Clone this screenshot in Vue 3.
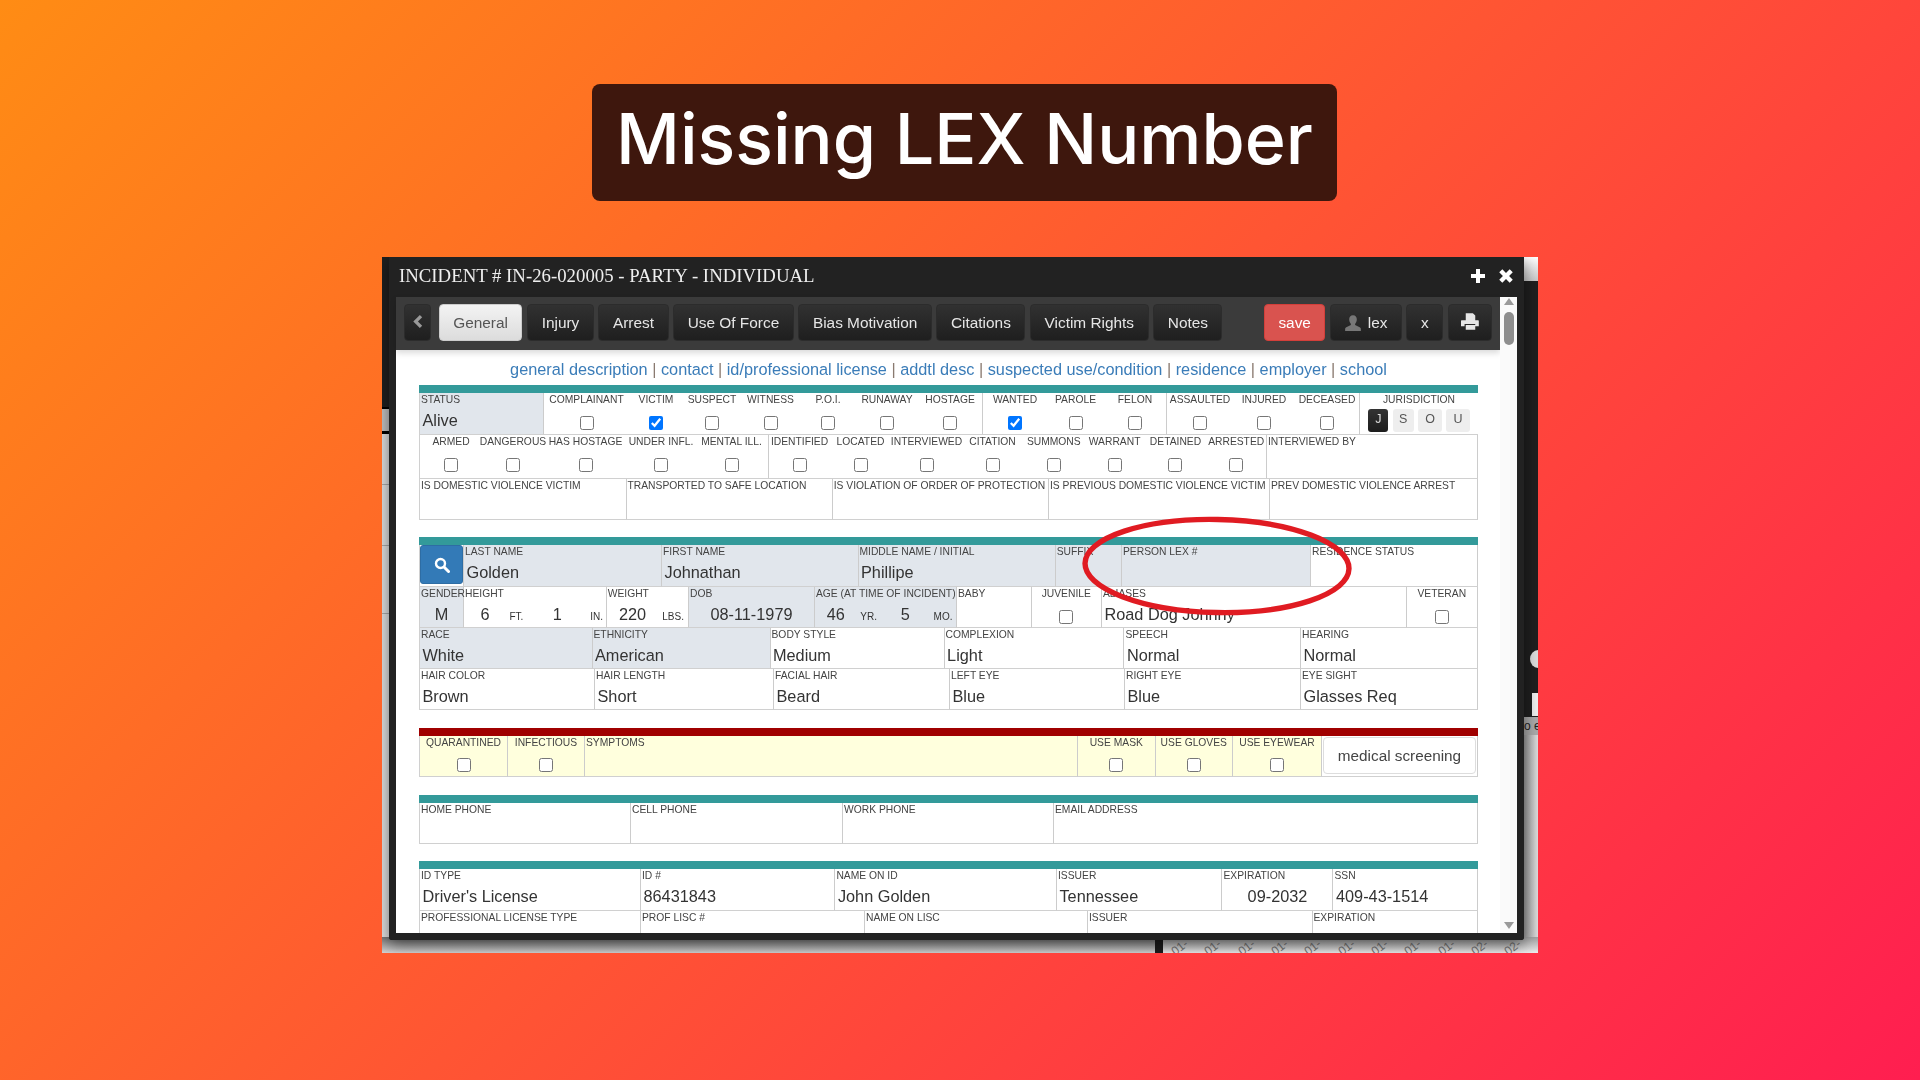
<script setup>
const tabs = ["Injury", "Arrest", "Use Of Force", "Bias Motivation", "Citations", "Victim Rights", "Notes"];
const links = ["general description", "contact", "id/professional license", "addtl desc", "suspected use/condition", "residence", "employer", "school"];
const dates = ["01-", "01-", "01-", "01-", "01-", "01-", "01-", "01-", "01-", "02-", "02-"];

// t = text cell, c = checkbox cell
const t = (w, label, value = "", fill = false, extra = {}) => ({ w, label, value, fill, line: true, ...extra });
const c = (w, label, checked = false, line = false) => ({ w, label, check: true, checked, line });

const sections = [
  {
    color: "#339a9a",
    mb: 17,
    rows: [
      {
        h: 42,
        cols: [
          t(125, "Status", "Alive", true),
          c(85, "Complainant"), c(54, "Victim", true), c(58, "Suspect"), c(59, "Witness"),
          c(56, "P.O.I."), c(62, "Runaway"), c(65, "Hostage", false, true),
          c(64, "Wanted", true), c(57, "Parole"), c(63, "Felon", false, true),
          c(66, "Assaulted"), c(62, "Injured"), c(65, "Deceased", false, true),
          { label: "Jurisdiction", juris: true },
        ],
      },
      {
        h: 44,
        cols: [
          c(63, "Armed"), c(62, "Dangerous"), c(83, "Has Hostage"), c(68, "Under Infl."),
          c(74, "Mental Ill.", false, true),
          c(61, "Identified"), c(61, "Located"), c(71, "Interviewed"), c(61, "Citation"),
          c(61.6, "Summons"), c(60, "Warrant"), c(61.8, "Detained"),
          c(60.6, "Arrested", false, true),
          t(0, "Interviewed By"),
        ],
      },
      {
        h: 41,
        cols: [
          t(207.5, "Is Domestic Violence Victim"), t(206.2, "Transported To Safe Location"),
          t(216.3, "Is Violation Of Order Of Protection"), t(221, "Is Previous Domestic Violence Victim"),
          t(0, "Prev Domestic Violence Arrest"),
        ],
      },
    ],
  },
  {
    color: "#339a9a",
    mb: 18,
    rows: [
      {
        h: 42,
        cols: [
          { w: 45, search: true, line: true },
          t(198, "Last Name", "Golden", true), t(196.5, "First Name", "Johnathan", true),
          t(197.2, "Middle Name / Initial", "Phillipe", true), t(66.3, "Suffix", "", true),
          t(189, "Person Lex #", "", true), t(0, "Residence Status"),
        ],
      },
      {
        h: 41,
        cols: [
          t(45, "Gender", "M", true, { center: true }),
          { w: 142.7, label: "Height", line: true, parts: [{ w: 42, v: "6" }, { w: 21, u: "FT." }, { w: 61, v: "1" }, { w: 18, u: "IN." }] },
          { w: 82.3, label: "Weight", line: true, parts: [{ w: 52, v: "220" }, { w: 30, u: "LBS." }] },
          t(126, "DOB", "08-11-1979", true, { center: true }),
          { w: 142, label: "Age (At Time Of Incident)", fill: true, line: true, parts: [{ w: 42, v: "46" }, { w: 24, u: "YR." }, { w: 50, v: "5" }, { w: 26, u: "MO." }] },
          t(74.6, "Baby"), c(70.4, "Juvenile", false, true), t(304.6, "Aliases", "Road Dog Johnny"), c(0, "Veteran", false, true),
        ],
      },
      {
        h: 41,
        cols: [
          t(173.5, "Race", "White", true), t(178, "Ethnicity", "American", true), t(174.1, "Body Style", "Medium"),
          t(179.9, "Complexion", "Light"), t(176.5, "Speech", "Normal"), t(0, "Hearing", "Normal"),
        ],
      },
      {
        h: 41,
        cols: [
          t(176, "Hair Color", "Brown"), t(179, "Hair Length", "Short"), t(176, "Facial Hair", "Beard"),
          t(175, "Left Eye", "Blue"), t(176, "Right Eye", "Blue"), t(0, "Eye Sight", "Glasses Req"),
        ],
      },
    ],
  },
  {
    color: "#a00000",
    yellow: true,
    mb: 18,
    rows: [
      {
        h: 41,
        cols: [
          c(89, "Quarantined", false, true), c(77, "Infectious", false, true), t(493, "Symptoms"),
          c(77.6, "Use Mask", false, true), c(77.4, "Use Gloves", false, true), c(89, "Use Eyewear", false, true),
          { button: "medical screening", line: true },
        ],
      },
    ],
  },
  {
    color: "#339a9a",
    mb: 17,
    rows: [
      {
        h: 41,
        cols: [t(212, "Home Phone"), t(212, "Cell Phone"), t(211, "Work Phone"), t(0, "Email Address")],
      },
    ],
  },
  {
    color: "#339a9a",
    mb: 0,
    rows: [
      {
        h: 42,
        cols: [
          t(222, "ID Type", "Driver's License"), t(194.4, "ID #", "86431843"), t(221.6, "Name On ID", "John Golden"),
          t(165.5, "Issuer", "Tennessee"), t(111, "Expiration", "09-2032", false, { center: true }), t(0, "SSN", "409-43-1514"),
        ],
      },
      {
        h: 41,
        cols: [
          t(222, "Professional License Type"), t(224, "Prof Lisc #"), t(223, "Name On Lisc"),
          t(224.5, "Issuer"), t(0, "Expiration"),
        ],
      },
    ],
  },
];
</script>

<template>
  <div class="page">
    <h1 class="headline">Missing LEX Number</h1>

    <div class="frame">
      <div class="bg-left"></div>
      <div class="bg-right"></div>
      <div class="bg-corner"></div>
      <div class="bg-dot"></div>
      <div class="bg-box"></div>
      <div class="bg-note">o er</div>
      <div class="bg-bottom">
        <span class="bg-bar"></span>
        <div class="bg-dates">
          <span v-for="(d, i) in dates" :key="i">{{ d }}</span>
        </div>
      </div>

      <div class="modal">
        <div class="titlebar">
          <span class="title">INCIDENT # IN-26-020005 - PARTY - INDIVIDUAL</span>
          <svg class="tico" viewBox="0 0 16 16"><path d="M6 1h4v5h5v4h-5v5H6v-5H1V6h5z" /></svg>
          <svg class="tico" viewBox="1.500 1.500 13 13"><path d="M2.500 5 5 2.500l3 3 3-3L13.500 5l-3 3 3 3-2.500 2.500-3-3-3 3L2.500 11l3-3z" /></svg>
        </div>

        <div class="body">
          <div class="main">
            <div class="toolbar">
              <button class="tb back">
                <svg viewBox="0 0 16 16" width="15" height="15"><path d="M10.500 1 13 3.500 8.500 8l4.500 4.500-2.500 2.500-7-7z" /></svg>
              </button>
              <button class="tb active">General</button>
              <button v-for="tab in tabs" :key="tab" class="tb">{{ tab }}</button>
              <button class="tb fixed save">save</button>
              <button class="tb fixed lex">
                <svg class="user" viewBox="0 0 16 16" width="18" height="18"><path d="M8 1c2.200 0 3.400 1.600 3.400 3.700 0 1.500-.6 3-1.400 3.900-.3.4-.2 1 .3 1.300l3.700 1.800c.6.3 1 .8 1 1.500V15H1v-1.800c0-.7.4-1.200 1-1.500l3.700-1.800c.5-.3.6-.9.3-1.300-.8-.9-1.400-2.400-1.400-3.900C4.600 2.600 5.800 1 8 1z" /></svg>
                lex
              </button>
              <button class="tb fixed ex">x</button>
              <button class="tb fixed print">
                <svg viewBox="0 0 16 16" width="19" height="19"><path d="M4 1h6l2 2v4H4zM1.500 7h13c.3 0 .5.200.5.500V12h-3v-2H3v2H0V7.500c0-.3.200-.5.500-.5zM4 11h8v4H4z" /></svg>
              </button>
            </div>

            <div class="form">
              <div class="links">
                <template v-for="(link, i) in links" :key="link">
                  <span v-if="i" class="sep"> | </span>
                  <a class="link">{{ link }}</a>
                </template>
              </div>

              <section
                v-for="(sec, si) in sections"
                :key="si"
                :class="{ yellow: sec.yellow }"
                :style="{ marginBottom: sec.mb + 'px' }"
              >
                <div class="bar" :style="{ background: sec.color }"></div>
                <div v-for="(row, ri) in sec.rows" :key="ri" class="row" :style="{ height: row.h + 'px' }">
                  <div
                    v-for="(col, ci) in row.cols"
                    :key="ci"
                    class="cell"
                    :class="{ fill: col.fill, chk: col.check || col.juris, mid: col.center, grow: !col.w, nopad: col.button || col.search, line: col.line }"
                    :style="col.w ? { width: col.w + 'px' } : null"
                  >
                    <button v-if="col.search" class="search">
                      <svg viewBox="0 0 16 16" width="16" height="16"><circle cx="6.500" cy="6.500" r="4.500" fill="none" stroke="#fff" stroke-width="2.400" /><path d="m10 10 4.500 4.500" stroke="#fff" stroke-width="3" stroke-linecap="round" /></svg>
                    </button>
                    <button v-else-if="col.button" class="screening">{{ col.button }}</button>
                    <template v-else>
                      <div class="label">{{ col.label }}</div>
                      <input v-if="col.check" class="box" type="checkbox" :checked="col.checked" />
                      <div v-else-if="col.juris" class="juris">
                        <span class="jb on">J</span>
                        <span class="jb">S</span>
                        <span class="jb o">O</span>
                        <span class="jb o">U</span>
                      </div>
                      <div v-else-if="col.parts" class="parts">
                        <span
                          v-for="(p, pi) in col.parts"
                          :key="pi"
                          :class="p.u ? 'unit' : 'num'"
                          :style="{ width: p.w + 'px' }"
                        >{{ p.v || p.u }}</span>
                      </div>
                      <div v-else class="value">{{ col.value }}</div>
                    </template>
                  </div>
                </div>
              </section>
            </div>
          </div>

          <div class="scroll">
            <span class="arrow up"></span>
            <span class="thumb"></span>
            <span class="arrow down"></span>
          </div>
        </div>
      </div>

      <svg class="circle" viewBox="0 0 280 110" width="280" height="110">
        <ellipse cx="140" cy="55" rx="132" ry="46.500" fill="none" stroke="#e01b22" stroke-width="5.400" transform="rotate(1.200 140 55)" />
      </svg>
    </div>
  </div>
</template>

<style scoped>
.page {
  width: 1920px;
  height: 1080px;
  overflow: hidden;
  background: linear-gradient(135deg, #ff8c14 0%, #ff5533 50%, #ff1e50 100%);
  display: flex;
  flex-direction: column;
  align-items: center;
  font-family: "Liberation Sans", Arial, sans-serif;
}
.headline {
  margin: 84px 0 0 9px;
  height: 117px;
  width: 745px;
  box-sizing: border-box;
  padding-bottom: 8px;
  display: flex;
  align-items: center;
  justify-content: center;
  background: #3e170d;
  border-radius: 8px;
  color: #fff;
  font-family: Inter, "Open Sans", sans-serif;
  font-size: 70px;
  font-weight: 500;
}
.frame {
  position: relative;
  margin-top: 56px;
  width: 1156px;
  height: 696px;
  overflow: hidden;
  background: #1f1f1f;
}
.bg-left {
  position: absolute;
  left: 0;
  top: 150px;
  bottom: 0;
  width: 8px;
  background: linear-gradient(180deg, #000 0, #000 2px, #c2c2c2 2px, #c2c2c2 24px, #000 24px, #000 27px, #e0e0e0 27px, #e0e0e0 77px, #aaa 77px, #aaa 78px, #e0e0e0 78px, #e0e0e0 138px, #aaa 138px, #aaa 139px, #e0e0e0 139px, #e0e0e0 206px, #aaa 206px, #aaa 207px, #e0e0e0 207px);
}
.bg-right {
  position: absolute;
  right: 0;
  top: 478px;
  bottom: 0;
  width: 14px;
  background: linear-gradient(90deg, #9c9c9c, #dcdcdc);
}
.bg-corner {
  position: absolute;
  right: 0;
  top: 0;
  width: 14px;
  height: 24px;
  background: linear-gradient(180deg, #fff, #c8c8c8);
}
.bg-dot {
  position: absolute;
  right: -8px;
  top: 393px;
  width: 16px;
  height: 18px;
  border-radius: 50%;
  background: #ddd;
}
.bg-box {
  position: absolute;
  right: 0;
  top: 436px;
  width: 6px;
  height: 23px;
  background: #eee;
}
.bg-note {
  position: absolute;
  right: 0;
  top: 460px;
  width: 14px;
  height: 18px;
  overflow: hidden;
  white-space: nowrap;
  background: #aaa;
  color: #222;
  font-size: 12px;
  line-height: 18px;
}
.bg-bottom {
  position: absolute;
  left: 0;
  right: 0;
  bottom: 0;
  height: 16px;
  display: flex;
  background: linear-gradient(180deg, #777, #d4d4d4);
}
.bg-bar {
  margin-left: 773px;
  width: 8px;
  background: #1c1c1c;
}
.bg-dates {
  flex: 1;
  display: flex;
  gap: 16px;
  overflow: hidden;
  padding-left: 6px;
  color: #777;
  font-size: 12px;
  line-height: 22px;
  background: linear-gradient(180deg, #a0a0a0, #ececec);
}
.bg-dates span {
  flex: none;
  transform: rotate(-38deg);
}
.modal {
  position: absolute;
  left: 7px;
  top: 0;
  width: 1135px;
  height: 683px;
  box-sizing: border-box;
  border: solid #222;
  border-width: 0 7px 7px;
  border-radius: 0 0 3px 3px;
  background: #222;
  box-shadow: 0 5px 15px rgba(0, 0, 0, 0.5);
  display: flex;
  flex-direction: column;
  filter: blur(0.45px);
}
.titlebar {
  height: 40px;
  flex: none;
  display: flex;
  align-items: center;
  gap: 12px;
  padding: 0 3px 2px 3px;
  box-sizing: border-box;
  color: #eee;
}
.title {
  flex: 1;
  font-family: "Liberation Serif", serif;
  font-size: 18.800px;
}
.tico {
  width: 16px;
  height: 16px;
  fill: #fff;
}
.body {
  flex: 1;
  min-height: 0;
  display: flex;
}
.main {
  flex: 1;
  min-width: 0;
  display: flex;
  flex-direction: column;
  background: #fff;
}
.toolbar {
  flex: none;
  height: 53px;
  box-sizing: border-box;
  padding: 7px 8px 9px;
  display: flex;
  gap: 4.700px;
  background: #3b3b3b;
  box-shadow: 0 3px 6px rgba(0, 0, 0, 0.15);
  position: relative;
}
.tb {
  height: 37px;
  padding: 0 13.500px;
  border: 1px solid #2c2c2c;
  border-radius: 4px;
  background: linear-gradient(180deg, #313131, #1f1f1f);
  color: #e6e6e6;
  font-family: inherit;
  font-size: 15.400px;
  display: flex;
  align-items: center;
  justify-content: center;
  gap: 6px;
}
.tb svg {
  fill: #e6e6e6;
}
.tb .user {
  fill: #777;
}
.back {
  width: 27px;
  padding: 0;
  margin-right: 3px;
}
.back svg {
  fill: #999;
  margin-top: -3px;
}
.active {
  background: linear-gradient(180deg, #f3f3f3, #dcdcdc);
  border-color: #ccc;
  color: #555;
}
.fixed {
  padding: 0;
}
.save {
  width: 60.500px;
  margin-left: auto;
  background: #d9534f;
  border-color: #d43f3a;
  color: #fff;
}
.lex {
  width: 72px;
}
.ex {
  width: 37px;
}
.print {
  width: 44px;
}
.print svg {
  margin-top: -3px;
}
.form {
  flex: 1;
  min-height: 0;
  overflow: hidden;
  padding: 0 22px 0 23px;
}
.links {
  height: 35px;
  line-height: 38px;
  text-align: center;
  font-size: 16.300px;
  white-space: nowrap;
}
.link {
  color: #3a7cb8;
}
.sep {
  color: #8a7a70;
}
.bar {
  height: 8px;
}
.row {
  display: flex;
  box-sizing: border-box;
}
.cell {
  box-sizing: border-box;
  flex: none;
  border-bottom: 1.500px solid #d0d0d0;
  color: #333;
}
.cell.line {
  border-right: 1px solid #ccc;
}
.cell:first-child {
  border-left: 1.500px solid #d0d0d0;
}
.grow {
  flex: 1;
  min-width: 0;
}
.fill {
  background: #e1e6ec;
}
.yellow .cell {
  background: #ffffdd;
}
.yellow .cell.nopad {
  background: #fff;
  padding: 1px 1px 2px 1px;
}
.label {
  height: 13px;
  padding-left: 1px;
  font-size: 10.300px;
  line-height: 13px;
  text-transform: uppercase;
  white-space: nowrap;
  color: #444;
}
.value {
  margin-top: 4px;
  padding-left: 2.500px;
  font-size: 16.300px;
  line-height: 20px;
  white-space: nowrap;
}
.mid .value {
  text-align: center;
  padding-left: 0;
}
.chk .label {
  padding: 0;
  display: flex;
  justify-content: center;
}
.box {
  display: block;
  width: 14px;
  height: 14px;
  margin: 10px auto 0;
}
.yellow .box {
  margin-top: 9px;
}
.parts {
  display: flex;
  align-items: center;
  margin-top: 4px;
  height: 20px;
}
.num {
  text-align: center;
  font-size: 16.300px;
}
.unit {
  text-align: center;
  font-size: 10px;
  padding-top: 4px;
  white-space: nowrap;
}
.nopad {
  padding: 0;
}
.search {
  display: flex;
  align-items: center;
  justify-content: center;
  width: 100%;
  height: 39px;
  border: 1px solid #2e6da4;
  border-radius: 3px;
  background: #337ab7;
}
.screening {
  width: 100%;
  height: 100%;
  border: 1px solid #ddd;
  border-radius: 4px;
  background: #fff;
  color: #444;
  font-family: inherit;
  font-size: 15.300px;
}
.juris {
  display: flex;
  justify-content: center;
  gap: 4.500px;
  margin-top: 3px;
}
.juris .jb {
  width: 21px;
  height: 23px;
  border-radius: 3px;
  background: #eee;
  color: #555;
  font-size: 12.500px;
  line-height: 21px;
  text-align: center;
}
.juris .o {
  width: 23.500px;
}
.juris .on {
  width: 20px;
  background: linear-gradient(180deg, #333, #1d1d1d);
  color: #ddd;
}
.scroll {
  flex: none;
  width: 17px;
  position: relative;
  background: #fafafa;
  display: flex;
  flex-direction: column;
  align-items: center;
}
.arrow {
  width: 0;
  height: 0;
  border: 5.500px solid transparent;
}
.up {
  margin-top: 1px;
  border-top: 0;
  border-bottom: 7px solid #9a9a9a;
}
.thumb {
  margin-top: 7px;
  width: 10px;
  height: 33px;
  border-radius: 5px;
  background: #8e8e8e;
}
.down {
  margin-top: auto;
  margin-bottom: 4px;
  border-bottom: 0;
  border-top: 7px solid #9a9a9a;
}
.circle {
  position: absolute;
  left: 695px;
  top: 254px;
  pointer-events: none;
}
</style>
